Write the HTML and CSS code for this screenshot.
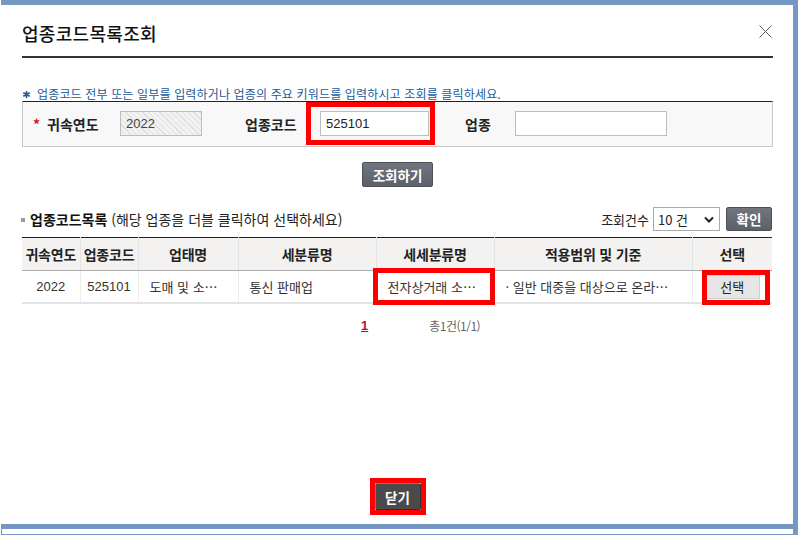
FILE: index.html
```html
<!DOCTYPE html>
<html lang="ko">
<head>
    <meta charset="UTF-8">
    <meta name="viewport" content="width=device-width, initial-scale=1.0">
    <title>업종코드목록조회</title>
    <link rel="stylesheet" href="styles.css">
</head>
<body>
    <div class="window">
        <div class="dialog">
            <div class="dlg-head">
                <h1>업종코드목록조회</h1>
                <button class="btn-x" title="닫기">
                    <svg width="13" height="13" viewBox="0 0 13 13">
                        <path d="M0.5 0.5 L12.5 12.5 M12.5 0.5 L0.5 12.5" stroke="#5a6070" stroke-width="1" fill="none"/>
                    </svg>
                </button>
            </div>

            <p class="notice">
                <svg class="notice-mark" width="7" height="7" viewBox="0 0 7 7">
                    <path d="M3.5 0 V7 M0.3 1.7 L6.7 5.3 M6.7 1.7 L0.3 5.3" stroke="#1a5a9a" stroke-width="1.6"/>
                </svg>업종코드 전부 또는 일부를 입력하거나 업종의 주요 키워드를 입력하시고 조회를 클릭하세요.
            </p>

            <div class="search-box">
                <span class="sf-label sf-first"><em class="req">*</em>귀속연도</span>
                <input class="sf-input sf-year" type="text" value="2022" disabled>
                <span class="sf-label sf-code">업종코드</span>
                <span class="marked">
                    <input class="sf-input sf-codein" type="text" value="525101">
                    <span class="mark mark-code"></span>
                </span>
                <span class="sf-label sf-kind">업종</span>
                <input class="sf-input sf-kindin" type="text" value="">
            </div>

            <div class="btn-row">
                <button class="btn-dark btn-search">조회하기</button>
            </div>

            <div class="list-head">
                <div class="list-title">
                    <span class="sq"></span><strong>업종코드목록</strong> (해당 업종을 더블 클릭하여 선택하세요)
                </div>
                <div class="list-tools">
                    <span>조회건수</span>
                    <span class="select-wrap">
                        <select class="cnt">
                            <option>10 건</option>
                            <option>20 건</option>
                            <option>50 건</option>
                        </select>
                        <svg class="chev" width="10" height="7" viewBox="0 0 10 7">
                            <path d="M1 1.5 L5 5.5 L9 1.5" stroke="#222" stroke-width="2" fill="none"/>
                        </svg>
                    </span>
                    <button class="btn-dark btn-ok">확인</button>
                </div>
            </div>

            <table class="grid">
                <colgroup>
                    <col style="width:58px">
                    <col style="width:58px">
                    <col style="width:100px">
                    <col style="width:138px">
                    <col style="width:118px">
                    <col style="width:198px">
                    <col style="width:80px">
                </colgroup>
                <thead>
                    <tr>
                        <th>귀속연도</th>
                        <th>업종코드</th>
                        <th>업태명</th>
                        <th>세분류명</th>
                        <th>세세분류명</th>
                        <th>적용범위 및 기준</th>
                        <th>선택</th>
                    </tr>
                </thead>
                <tbody>
                    <tr>
                        <td class="c">2022</td>
                        <td class="c">525101</td>
                        <td>도매 및 소…</td>
                        <td>통신 판매업</td>
                        <td class="marked-cell">전자상거래 소…<span class="mark mark-cell"></span></td>
                        <td>· 일반 대중을 대상으로 온라…</td>
                        <td class="c marked-cell"><button class="btn-pick">선택</button><span class="mark mark-pick"></span></td>
                    </tr>
                </tbody>
            </table>

            <div class="paging">
                <a href="#" class="page-on">1</a>
                <span class="total">총1건(1/1)</span>
            </div>

            <div class="dlg-foot">
                <span class="marked">
                    <button class="btn-close">닫기</button>
                    <span class="mark mark-close"></span>
                </span>
            </div>
        </div>
    </div>
</body>
</html>
```

FILE: styles.css
```css
html, body {
    margin: 0;
    padding: 0;
    background-color: #fff;
}
body {
    font-family: "Noto Sans CJK KR", "Noto Sans", sans-serif;
    font-size: 13px;
    color: #333;
}
.window {
    width: 797px;
    height: 535px;
    box-sizing: border-box;
    border-top: 5px solid #7598c3;
    border-right: 5px solid #7598c3;
    border-bottom: 1px solid #7598c3;
    border-left: 1px solid #7598c3;
    margin-left: 1px;
}
.dialog {
    height: 524px;
    box-sizing: border-box;
    border-bottom: 5px solid #7598c3;
    margin-left: -1px;
    padding: 0 20px 0 21px;
    display: flex;
    flex-direction: column;
    background-color: #fff;
}
.dlg-head {
    display: flex;
    justify-content: space-between;
    align-items: center;
    padding: 18px 0 13px;
    border-bottom: 2px solid #333;
}
.dlg-head h1 {
    margin: 0;
    font-size: 18px;
    line-height: 20px;
    letter-spacing: 0.3px;
    font-weight: 500;
    color: #111;
}
.btn-x {
    border: 0;
    background: none;
    padding: 0;
    margin: 0 1px 4px 0;
    width: 13px;
    height: 13px;
    cursor: pointer;
}
.btn-x svg {
    display: block;
}
.notice {
    margin: 29px 0 0;
    line-height: 14px;
    font-size: 12px;
    letter-spacing: 0.15px;
    color: #1a5a9a;
    padding-left: 1px;
}
.notice-mark {
    margin-right: 7px;
    vertical-align: 1px;
}
.search-box {
    display: flex;
    align-items: center;
    background-color: #f8f8f8;
    border-top: 1px solid #222;
    border-left: 1px solid #c8c8c8;
    border-right: 1px solid #c8c8c8;
    border-bottom: 1px solid #c8c8c8;
    padding: 9px 0 10px 10px;
}
.sf-label {
    font-weight: bold;
    font-size: 14px;
    color: #222;
    flex: none;
}
.sf-first {
    width: 87px;
}
.req {
    font-style: normal;
    color: #d2141e;
    margin-right: 7px;
}
.sf-code {
    margin-left: 43px;
    width: 75px;
}
.sf-kind {
    margin-left: 36px;
    width: 50px;
}
.sf-input {
    height: 25px;
    box-sizing: border-box;
    border: 1px solid #bdbdbd;
    background-color: #fff;
    font-family: "Liberation Sans", Arial, sans-serif;
    font-size: 13px;
    color: #222;
    padding: 0 5px;
    margin: 0;
    flex: none;
}
.sf-year {
    width: 82px;
    color: #444;
    background: repeating-linear-gradient(45deg, #f2f2f2 0, #f2f2f2 3px, #dedede 3px, #dedede 4px);
}
.sf-codein {
    width: 109px;
    display: block;
}
.sf-kindin {
    width: 152px;
}
.marked {
    position: relative;
    display: inline-block;
    flex: none;
}
.mark {
    position: absolute;
    border: 5px solid #ff0000;
    box-sizing: border-box;
    pointer-events: none;
}
.mark-code {
    left: -14px;
    top: -9px;
    width: 129px;
    height: 43px;
}
.btn-row {
    margin-top: 15px;
    text-align: center;
}
.btn-dark {
    border: 1px solid #4c5058;
    border-radius: 2px;
    background: linear-gradient(#70757e, #5b6069);
    color: #fff;
    font-family: "Noto Sans CJK KR", sans-serif;
    font-weight: bold;
    font-size: 13.5px;
    cursor: pointer;
    padding: 0;
}
.btn-search {
    width: 71px;
    height: 25px;
}
.list-head {
    margin-top: 20px;
    height: 24px;
    display: flex;
    justify-content: space-between;
    align-items: center;
}
.list-title {
    color: #222;
    font-size: 14px;
}
.list-title strong {
    color: #111;
}
.sq {
    display: inline-block;
    width: 4px;
    height: 4px;
    background-color: #999;
    margin: 0 5px 0 -1px;
    vertical-align: 3px;
}
.list-tools {
    display: flex;
    align-items: center;
    color: #222;
    margin-right: 1px;
}
.select-wrap {
    position: relative;
    margin-left: 4px;
}
.cnt {
    appearance: none;
    -webkit-appearance: none;
    width: 67px;
    height: 24px;
    border: 1px solid #aaa;
    border-radius: 0;
    background-color: #fff;
    font-family: "Noto Sans CJK KR", sans-serif;
    font-size: 13px;
    color: #222;
    padding: 0 0 0 4px;
    display: block;
}
.chev {
    position: absolute;
    right: 6px;
    top: 9px;
    pointer-events: none;
}
.btn-ok {
    width: 46px;
    height: 24px;
    margin-left: 6px;
}
.grid {
    margin-top: 6px;
    width: 750px;
    border-collapse: collapse;
    table-layout: fixed;
    border-top: 1px solid #222;
}
.grid th {
    height: 32px;
    padding: 0;
    background-color: #f3f2f1;
    color: #222;
    font-weight: bold;
    font-size: 14px;
    letter-spacing: -0.2px;
    border-left: 1px solid #e3e3e3;
    border-bottom: 1px solid #acacac;
}
.grid td {
    height: 31px;
    padding: 0 11px;
    color: #333;
    font-size: 13px;
    white-space: nowrap;
    overflow: visible;
    border-left: 1px solid #ececec;
    border-bottom: 2px solid #e2e2e2;
}
.grid th:first-child,
.grid td:first-child {
    border-left: 0;
}
.grid td.c {
    text-align: center;
    padding: 0;
    font-family: "Liberation Sans", Arial, sans-serif;
}
.marked-cell {
    position: relative;
}
.mark-cell {
    left: -4px;
    top: -3px;
    width: 122px;
    height: 37px;
}
.mark-pick {
    left: 9px;
    top: -1px;
    width: 68px;
    height: 35px;
}
.btn-pick {
    width: 55px;
    height: 24px;
    border: 1px solid #cfcfcf;
    background-color: #e6e6e6;
    color: #222;
    font-family: "Noto Sans CJK KR", sans-serif;
    font-size: 13px;
    padding: 0;
    cursor: pointer;
}
.paging {
    margin-top: 14px;
    line-height: 16px;
    display: flex;
    padding-left: 339px;
}
.page-on {
    color: #c0102b;
    font-weight: bold;
    font-family: "Liberation Sans", Arial, sans-serif;
    font-size: 13px;
    text-decoration: underline;
}
.total {
    margin-left: 61px;
    color: #666;
    font-size: 12px;
    letter-spacing: -0.5px;
}
.dlg-foot {
    margin-top: auto;
    padding-bottom: 14px;
    text-align: center;
}
.btn-close {
    width: 46px;
    height: 27px;
    display: block;
    border: 1px solid #2e2e2e;
    border-top-color: #777;
    border-left-color: #777;
    border-radius: 2px;
    background-color: #4a4a4a;
    color: #fff;
    font-family: "Noto Sans CJK KR", sans-serif;
    font-weight: bold;
    font-size: 13.5px;
    padding: 0;
    cursor: pointer;
}
.mark-close {
    left: -5px;
    top: -5px;
    width: 56px;
    height: 37px;
}
```
